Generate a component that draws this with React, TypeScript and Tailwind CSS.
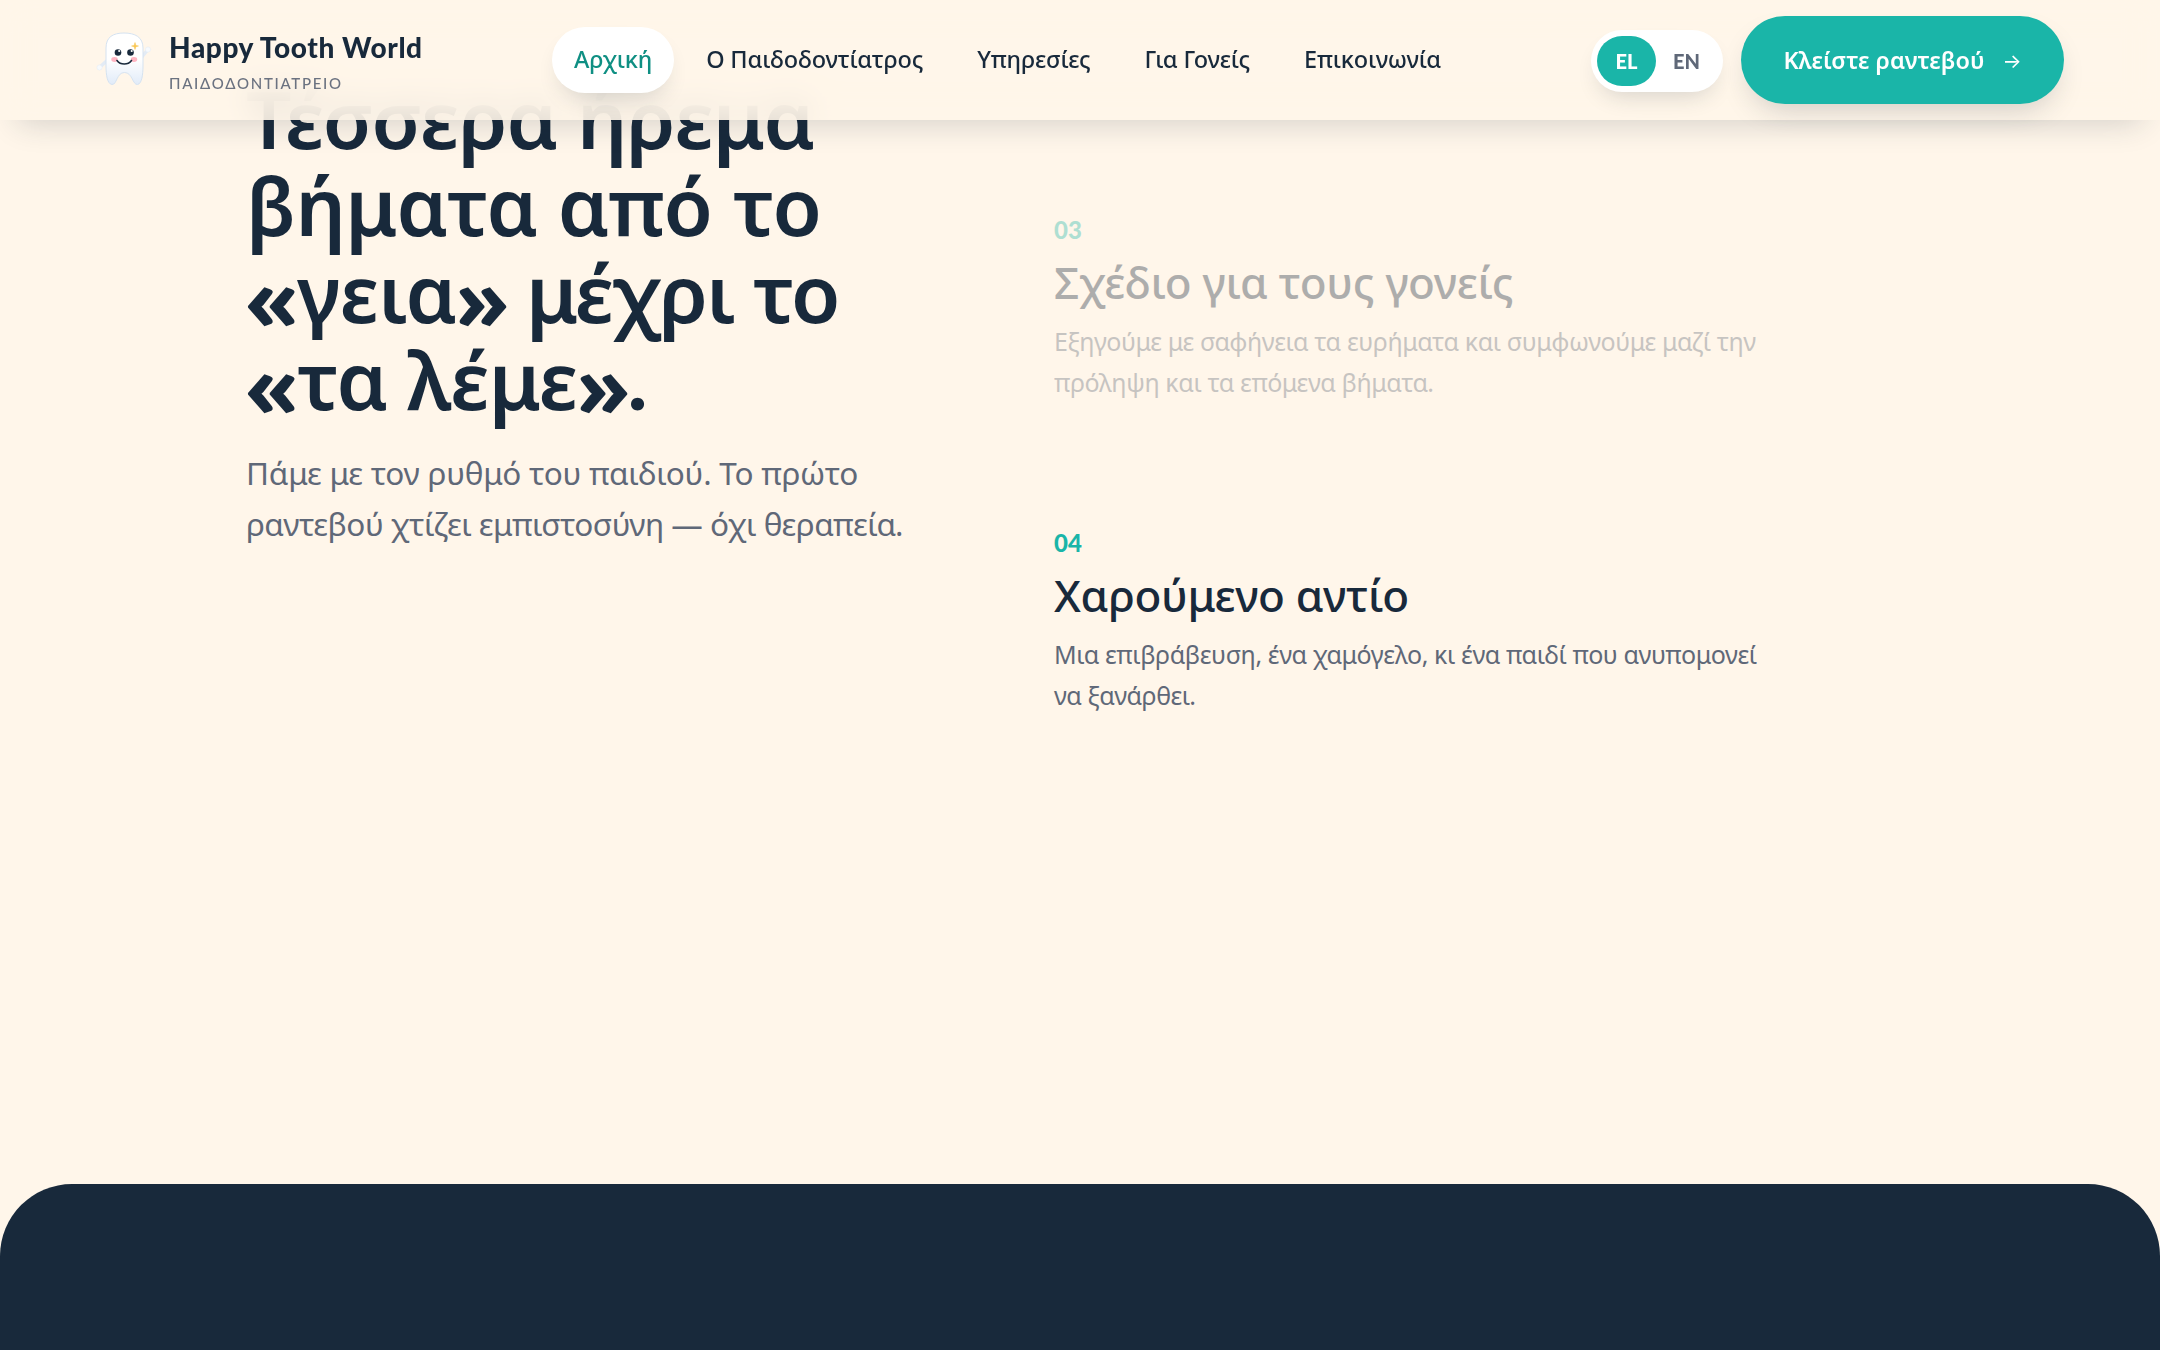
import React from 'react';

interface Step {
    number: string;
    title: string;
    lines: string[];
    muted?: boolean;
}

const navItems = ['Αρχική', 'Ο Παιδοδοντίατρος', 'Υπηρεσίες', 'Για Γονείς', 'Επικοινωνία'];

const steps: Step[] = [
    {
        number: '03',
        title: 'Σχέδιο για τους γονείς',
        lines: ['Εξηγούμε με σαφήνεια τα ευρήματα και συμφωνούμε μαζί την', 'πρόληψη και τα επόμενα βήματα.'],
        muted: true,
    },
    {
        number: '04',
        title: 'Χαρούμενο αντίο',
        lines: ['Μια επιβράβευση, ένα χαμόγελο, κι ένα παιδί που ανυπομονεί', 'να ξανάρθει.'],
    },
];

const ToothLogo: React.FC = () => (
    <svg className="-mt-[5px]" width="60" height="60" viewBox="0 0 60 60" fill="none">
        <defs>
            <linearGradient id="enamel" x1="30" y1="4" x2="30" y2="58" gradientUnits="userSpaceOnUse">
                <stop offset="0.5" stopColor="#ffffff" />
                <stop offset="1" stopColor="#dfeaf8" />
            </linearGradient>
        </defs>
        <path d="M12.500 33 L6 39" stroke="#e3ebf5" strokeWidth="3.500" strokeLinecap="round" />
        <path d="M47 30 L53.500 22" stroke="#e3ebf5" strokeWidth="3.500" strokeLinecap="round" />
        <circle cx="5.500" cy="39.500" r="2.600" fill="#f7fafd" stroke="#e3ebf5" strokeWidth="0.500" />
        <circle cx="54" cy="21.500" r="2.600" fill="#f7fafd" stroke="#e3ebf5" strokeWidth="0.500" />
        <path
            d="M12 20C12 9 19 5 30 5C41 5 49 9 49 20V38C49 46 48 56 43.500 56.500C38.500 57 38.500 44.500 30.500 44.500C22.500 44.500 23 57 18 56.500C13 56 12 46 12 38Z"
            fill="url(#enamel)"
            stroke="#d5e2f0"
            strokeWidth="1"
        />
        <ellipse cx="20.500" cy="31.500" rx="3.200" ry="2.400" fill="#ffb5c2" />
        <ellipse cx="40" cy="31.500" rx="3.200" ry="2.400" fill="#ffb5c2" />
        <circle cx="24" cy="24.500" r="3.300" fill="#18293b" />
        <circle cx="36.500" cy="24.500" r="3.300" fill="#18293b" />
        <circle cx="25.200" cy="23" r="1.100" fill="#ffffff" />
        <circle cx="37.700" cy="23" r="1.100" fill="#ffffff" />
        <path d="M23 32.500C26.500 37.200 34 37.200 37.500 32.500" stroke="#18293b" strokeWidth="1.600" strokeLinecap="round" />
        <path d="M41 14.500L41.900 17.400L44.500 18L41.900 18.700L41 21.500L40.100 18.700L37.500 18L40.100 17.400Z" fill="#f9c54e" stroke="#f9c54e" strokeWidth="0.500" />
    </svg>
);

const Header: React.FC = () => (
    <header className="absolute inset-x-0 top-0 z-10 h-[120px]">
        <div className="absolute inset-0 bg-[#fff6ea]/90 opacity-[0.96] backdrop-blur-lg" />
        <div className="absolute inset-0 shadow-[0_20px_32px_-18px_rgba(26,43,60,0.2)]" />
        <div className="relative flex h-full items-center pr-24 pl-[94px]">
            <div className="flex w-[458px] items-center">
                <ToothLogo />
                <div className="pt-2 pl-[15px]">
                    <p className="font-[Lato] text-[28px] leading-[38px] font-black tracking-[0.6px] whitespace-nowrap">Happy Tooth World</p>
                    <p className="font-[Lato] text-[15px] leading-[34px] font-medium tracking-[1.700px] text-[#6b7280]">ΠΑΙΔΟΔΟΝΤΙΑΤΡΕΙΟ</p>
                </div>
            </div>
            <nav className="flex items-center gap-[10px]">
                {navItems.map((item, i) => (
                    <a
                        key={item}
                        className={
                            i === 0
                                ? 'rounded-[36px] bg-white px-[22px] pt-3 pb-[14px] text-[23.500px] leading-10 font-medium tracking-[-0.180px] whitespace-nowrap text-[#0f8f83] shadow-[0_12px_24px_-10px_rgba(26,43,60,0.2)]'
                                : 'px-[22px] pt-3 pb-[14px] text-[23.500px] leading-10 font-medium tracking-[-0.150px] whitespace-nowrap'
                        }
                    >
                        {item}
                    </a>
                ))}
            </nav>
            <div className="ml-auto flex items-center gap-[18px]">
                <div className="mt-[2px] flex h-[62px] w-[132px] items-center rounded-[31px] bg-white p-[6px] font-[Lato] text-[20px] font-black shadow-[0_12px_24px_-10px_rgba(26,43,60,0.2)]">
                    <span className="flex h-[50px] w-[59px] items-center justify-center rounded-[25px] bg-[#1ab5a8] text-white">EL</span>
                    <span className="flex h-[50px] w-[61px] items-center justify-center text-[#5f6878]">EN</span>
                </div>
                <button className="flex h-[88px] w-[323px] items-center justify-center rounded-[44px] bg-[#1ab5a8] pt-[2px] text-[23.400px] font-semibold whitespace-nowrap text-white shadow-[0_14px_30px_-10px_rgba(26,43,60,0.22)]">
                    Κλείστε ραντεβού
                    <span className="ml-[18px] font-[Inter] text-[20px] font-normal">→</span>
                </button>
            </div>
        </div>
    </header>
);

const StepItem: React.FC<{ step: Step }> = ({ step }) => (
    <li className={step.muted ? 'opacity-35' : ''}>
        <p className="font-[Lato] text-[24px] leading-9 font-black text-[#1ab5a8]">{step.number}</p>
        <h3 className="mt-[7px] text-[44px] leading-[55px] font-medium tracking-[-0.300px] whitespace-nowrap">{step.title}</h3>
        <p className="mt-[11px] text-[25px] leading-[41px] tracking-[-0.400px] whitespace-nowrap text-[#5f6878]">
            {step.lines[0]}
            <br />
            {step.lines[1]}
        </p>
    </li>
);

// Guillemets are widened and lowered so they sit on the x-height of the Greek text
const Quote: React.FC<{ children: string }> = ({ children }) => (
    <span className="inline-flex h-0 w-[51px] scale-x-135 items-end justify-center align-[-9px] font-[Lato] text-[94px] leading-[0] font-black">
        {children}
    </span>
);

const App: React.FC = () => (
    <div className="relative flex h-[1350px] w-full flex-col overflow-hidden bg-[#fff6ea] font-['Noto_Sans',sans-serif] text-[#18293b]">
        <Header />
        <main className="flex h-[1184px] shrink-0 pl-[246px]">
            <div className="w-[808px] pt-[74px]">
                <h2 className="text-[80px] leading-[87px] font-semibold tracking-[-0.900px] whitespace-nowrap">
                    Τέσσερα ήρεμα
                    <br />
                    <span className="tracking-[-0.500px]">βήματα από το</span>
                    <br />
                    <Quote>«</Quote>γεια<Quote>»</Quote>
                    <span className="tracking-[-2px]"> μέχρι το</span>
                    <br />
                    <Quote>«</Quote>τα λέμε<Quote>»</Quote>
                    <span className="font-[Lato] leading-[0] font-black">.</span>
                </h2>
                <p className="mt-[25px] text-[31.500px] leading-[51px] whitespace-nowrap text-[#5f6878]">
                    <span className="tracking-[-0.250px]">Πάμε με τον ρυθμό του παιδιού. Το πρώτο</span>
                    <br />
                    <span className="tracking-[-0.530px]">ραντεβού χτίζει εμπιστοσύνη — όχι θεραπεία.</span>
                </p>
            </div>
            <ol className="flex flex-col gap-[122px] pt-[212px]">
                {steps.map((step) => (
                    <StepItem key={step.number} step={step} />
                ))}
            </ol>
        </main>
        <footer className="flex-1 rounded-t-[72px] bg-[#18293b]" />
    </div>
);

export default App;
